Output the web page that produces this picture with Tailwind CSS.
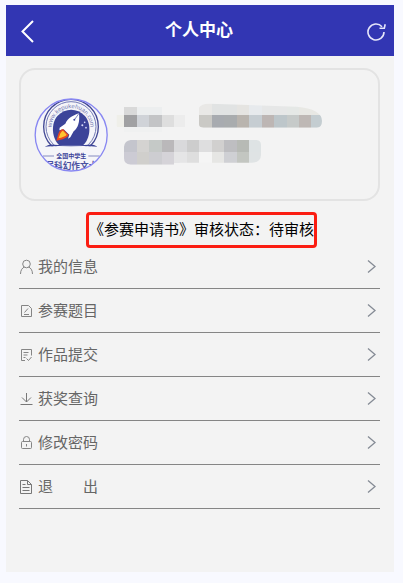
<!DOCTYPE html>
<html lang="zh-CN">
<head>
  <meta charset="UTF-8">
  <meta name="viewport" content="width=device-width, initial-scale=1">
  <title>个人中心</title>
  <script src="https://cdn.jsdelivr.net/npm/@tailwindcss/browser@4"></script>
</head>
<body class="bg-[#f8f9ff] min-h-screen flex flex-col pl-[6px] pt-[5px] pb-[11px] pr-[9px] font-['Liberation_Sans','Noto_Sans_CJK_SC',sans-serif]">
  <header class="bg-[#3236b3] text-white h-[51px] shrink-0 flex items-center justify-between pl-[14px] pr-2">
    <button type="button" aria-label="返回" class="w-5 h-6">
      <svg class="w-5 h-6" viewBox="0 0 20 24" fill="none" stroke="currentColor" stroke-width="2"><path d="M13 2 2.500 12.500 13 23"/></svg>
    </button>
    <h1 class="text-[17px] leading-6 font-bold">个人中心</h1>
    <button type="button" aria-label="刷新" class="w-7 h-5 flex justify-end">
      <svg class="w-5 h-5" viewBox="0 0 20 20" fill="none" stroke="#e6e6fa" stroke-width="1.600"><path d="M18 11A8 8 0 1 1 16 5.700"/><path d="M13.500 7.300h4.800l.9-4" stroke-width="1.600"/></svg>
    </button>
  </header>

  <main class="bg-[#f3f3f3] grow pl-[13px] pr-[14px] pt-3">
    <section class="border-2 border-[#e3e3e3] rounded-2xl h-[133px] flex items-center pl-[13px] gap-[7px]">
      <!-- 大赛徽标 -->
      <svg class="w-[74px] h-[74px] shrink-0" viewBox="28 38 222 222">
        <defs>
          <clipPath id="badge"><circle cx="139.500" cy="149" r="107"/></clipPath>
          <clipPath id="upper"><path d="M28 38h222v145H28z"/></clipPath>
          <path id="arc" d="M82 137A58 58 0 1 1 196 137"/>
        </defs>
        <circle cx="139.500" cy="149" r="108" fill="#f5f5f9"/>
        <g clip-path="url(#badge)">
          <g clip-path="url(#upper)">
            <circle cx="139" cy="124" r="82" fill="none" stroke="#434895" stroke-width="4"/>
            <circle cx="139" cy="124" r="75" fill="none" stroke="#737ab5" stroke-width="3"/>
            <path d="M104 180C82 160 77 115 99 91C121 67 158 67 180 91C202 115 197 160 175 180Z" fill="#3c4499"/>
          </g>
          <path d="M60 184Q75 176 88 178Q139 181 192 178Q205 176 219 184Q190 181 139 183Q90 181 60 184Z" fill="#3c4499"/>
          <text font-size="18" fill="#7379b2" font-family="Liberation Sans, sans-serif" text-anchor="middle"><textPath href="#arc" startOffset="50%">www.kepukehuan.com</textPath></text>
          <path d="M163 84C145 90 130 98 122 115L105 127L104 135L117 132L134 148L130 160L137 156L147 138C160 128 166 110 163 84Z" fill="#fff"/>
          <path d="M163 84 151 101" stroke="#3c4499" stroke-width="2"/>
          <circle cx="149" cy="103" r="3" fill="#3c4499"/>
          <path d="M115 131C101 134 101 148 95 166C114 162 128 158 132 148Z" fill="#e84720"/>
          <path d="M115 136C106 140 106 151 101 159C113 156 122 153 126 148Z" fill="#ffc431"/>
          <g fill="#dfe2fb"><circle cx="180" cy="111" r="2.500"/><circle cx="173" cy="120" r="3"/><circle cx="184" cy="127" r="2.500"/></g>
          <path d="M55 212h33M191 212h34" stroke="#858ac0" stroke-width="3"/>
          <text x="140" y="218" text-anchor="middle" font-size="18" font-weight="700" fill="#3c4499" font-family="Noto Sans CJK SC, sans-serif">全国中学生</text>
          <text x="140" y="251" text-anchor="middle" font-size="26" font-weight="700" fill="#4a51a0" font-family="Noto Sans CJK SC, sans-serif">届科幻作文大</text>
        </g>
        <circle cx="139.500" cy="149" r="108" fill="none" stroke="#8887f2" stroke-width="4"/>
      </svg>

      <!-- 打码的姓名和单位 -->
      <svg class="w-[208px] h-[64px] shrink-0" viewBox="15 24 624 192">
        <defs>
          <clipPath id="m1"><rect x="20" y="36" width="206" height="74" rx="20"/></clipPath>
          <clipPath id="m2"><path d="M267 38Q275 25 300 26L560 35Q636 42 636 78Q636 98 620 98H280Q267 98 267 88Z"/></clipPath>
          <clipPath id="m3"><path d="M62 135H440Q453 137 453 150V180Q452 203 425 203H210L190 209H62Q42 208 42 190V155Q44 137 62 135Z"/></clipPath>
        </defs>
        <g clip-path="url(#m1)" shape-rendering="crispEdges">
          <path d="M18 60h25v36H18z" fill="#efefe9"/>
          <path d="M42 36h38v24H42z" fill="#d9d9d9"/><path d="M80 36h75v24H80z" fill="#eceeef"/>
          <path d="M42 60h38v36H42z" fill="#a1a1a3"/><path d="M80 60h37v36H80z" fill="#d0d3d8"/><path d="M117 60h38v36h-38z" fill="#c3c4c6"/><path d="M155 60h37v36h-37z" fill="#dedede"/><path d="M192 60h34v36h-34z" fill="#ececec"/>
          <path d="M42 96h113v14H42z" fill="#f0f1f1"/>
        </g>
        <g clip-path="url(#m2)" shape-rendering="crispEdges">
          <path d="M267 24h38v36h-38z" fill="#e9e8e6"/><path d="M305 24h75v36h-75z" fill="#e1e3e3"/><path d="M380 24h37v36h-37z" fill="#e5e4e1"/><path d="M417 24h38v36h-38z" fill="#e7eaed"/><path d="M455 24h75v36h-75z" fill="#e6e7e7"/><path d="M530 24h37v36h-37z" fill="#e5e8e6"/><path d="M567 24h72v36h-72z" fill="#e8e8e4"/>
          <path d="M267 60h38v38h-38z" fill="#cac9c5"/><path d="M305 60h37v38h-37z" fill="#a8abb0"/><path d="M342 60h38v38h-38z" fill="#a9acae"/><path d="M380 60h37v38h-37z" fill="#b9b4ae"/><path d="M417 60h38v38h-38z" fill="#c6cdd2"/><path d="M455 60h37v38h-37z" fill="#bdb6b4"/><path d="M492 60h38v38h-38z" fill="#bdc6ca"/><path d="M530 60h37v38h-37z" fill="#c6cac9"/><path d="M567 60h37v38h-37z" fill="#beb8b5"/><path d="M604 60h35v38h-35z" fill="#c4cdd1"/>
        </g>
        <g clip-path="url(#m3)" shape-rendering="crispEdges">
          <path d="M42 134h38v37H42z" fill="#c4c5cd"/><path d="M80 134h37v37H80z" fill="#d4d3d1"/><path d="M117 134h38v37h-38z" fill="#c5c9c7"/><path d="M155 134h37v37h-37z" fill="#bab8ba"/><path d="M192 134h38v37h-38z" fill="#d9d9db"/><path d="M230 134h37v37h-37z" fill="#cdcdcd"/><path d="M267 134h38v37h-38z" fill="#dededf"/><path d="M305 134h37v37h-37z" fill="#d1d0cf"/><path d="M342 134h38v37h-38z" fill="#bebec1"/><path d="M380 134h37v37h-37z" fill="#b7bab5"/><path d="M417 134h38v37h-38z" fill="#dee3e4"/>
          <path d="M42 171h38v39H42z" fill="#cccbd4"/><path d="M80 171h37v39H80z" fill="#d0cfcc"/><path d="M117 171h38v39h-38z" fill="#cdcdd1"/><path d="M155 171h37v39h-37z" fill="#d5d3d8"/><path d="M192 171h38v34h-38z" fill="#e5e5e6"/><path d="M230 171h37v34h-37z" fill="#dedede"/><path d="M267 171h38v34h-38z" fill="#f5f5f5"/><path d="M305 171h37v34h-37z" fill="#e6e6e4"/><path d="M342 171h38v34h-38z" fill="#cfd0d4"/><path d="M380 171h37v34h-37z" fill="#c3c6c1"/><path d="M417 171h38v34h-38z" fill="#dfe3e4"/>
        </g>
      </svg>
    </section>

    <div class="flex justify-center mt-[11px] pl-1">
      <p class="border-3 border-[#fb1d12] rounded-sm h-9 leading-[30px] text-[15px] text-black whitespace-nowrap">《参赛申请书》审核状态：待审核</p>
    </div>

    <nav class="-mt-[3px] text-[15px] leading-6 text-[#666]">
      <a href="#info" class="flex items-center h-11 border-b border-[#858585] pr-[3px]">
        <svg class="w-4 h-4 mr-[3px]" viewBox="0 0 16 16" fill="none" stroke="#858585"><circle cx="7.500" cy="5" r="3.800"/><path d="M1.500 15c0-4 2-6.300 4-7M13.500 15c0-4-2-6.300-4-7"/></svg>
        <span class="grow">我的信息</span>
        <svg class="w-[10px] h-4" viewBox="0 0 10 16" fill="none" stroke="#858b95" stroke-width="1.300"><path d="m1 1.500 7 6L1 13.500"/></svg>
      </a>
      <a href="#topic" class="flex items-center h-11 border-b border-[#858585] pr-[3px]">
        <svg class="w-4 h-4 mr-[3px]" viewBox="0 0 16 16" fill="none" stroke="#858585"><path d="M2.500 2.500h7l3 3v8h-10zM5 11.500h5M5.500 9.500l3.500-4"/></svg>
        <span class="grow">参赛题目</span>
        <svg class="w-[10px] h-4" viewBox="0 0 10 16" fill="none" stroke="#858b95" stroke-width="1.300"><path d="m1 1.500 7 6L1 13.500"/></svg>
      </a>
      <a href="#submit" class="flex items-center h-11 border-b border-[#858585] pr-[3px]">
        <svg class="w-4 h-4 mr-[3px]" viewBox="0 0 16 16" fill="none" stroke="#858585"><path d="M12.500 8.500v-6h-10v11H6M4.500 5.500h5M4.500 8h4M4.500 10.500h2M7.500 11.500l2 2 3-3.500"/></svg>
        <span class="grow">作品提交</span>
        <svg class="w-[10px] h-4" viewBox="0 0 10 16" fill="none" stroke="#858b95" stroke-width="1.300"><path d="m1 1.500 7 6L1 13.500"/></svg>
      </a>
      <a href="#award" class="flex items-center h-11 border-b border-[#858585] pr-[3px]">
        <svg class="w-4 h-4 mr-[3px]" viewBox="0 0 16 16" fill="none" stroke="#777"><path d="M7.500 2v9M3 6.500l4.500 4.500L12 6.500M1.500 13.500h12"/></svg>
        <span class="grow">获奖查询</span>
        <svg class="w-[10px] h-4" viewBox="0 0 10 16" fill="none" stroke="#858b95" stroke-width="1.300"><path d="m1 1.500 7 6L1 13.500"/></svg>
      </a>
      <a href="#password" class="flex items-center h-11 border-b border-[#858585] pr-[3px]">
        <svg class="w-4 h-4 mr-[3px]" viewBox="0 0 16 16" fill="none" stroke="#858585"><rect x="2.500" y="6.500" width="10" height="7" rx="1"/><path d="M4.500 6.500V4.500a3 3 0 0 1 6 0v2M7.500 9v2.500"/></svg>
        <span class="grow">修改密码</span>
        <svg class="w-[10px] h-4" viewBox="0 0 10 16" fill="none" stroke="#858b95" stroke-width="1.300"><path d="m1 1.500 7 6L1 13.500"/></svg>
      </a>
      <a href="#logout" class="flex items-center h-11 border-b border-[#858585] pr-[3px]">
        <svg class="w-4 h-4 mr-[3px]" viewBox="0 0 16 16" fill="none" stroke="#777"><path d="M1.500 1.500h7l4 4v9h-11zM8.500 1.500v4h4M3.500 5.500h3M3.500 8.500h7M3.500 11.500h7"/></svg>
        <span class="grow">退　　出</span>
        <svg class="w-[10px] h-4" viewBox="0 0 10 16" fill="none" stroke="#858b95" stroke-width="1.300"><path d="m1 1.500 7 6L1 13.500"/></svg>
      </a>
    </nav>
  </main>
</body>
</html>
